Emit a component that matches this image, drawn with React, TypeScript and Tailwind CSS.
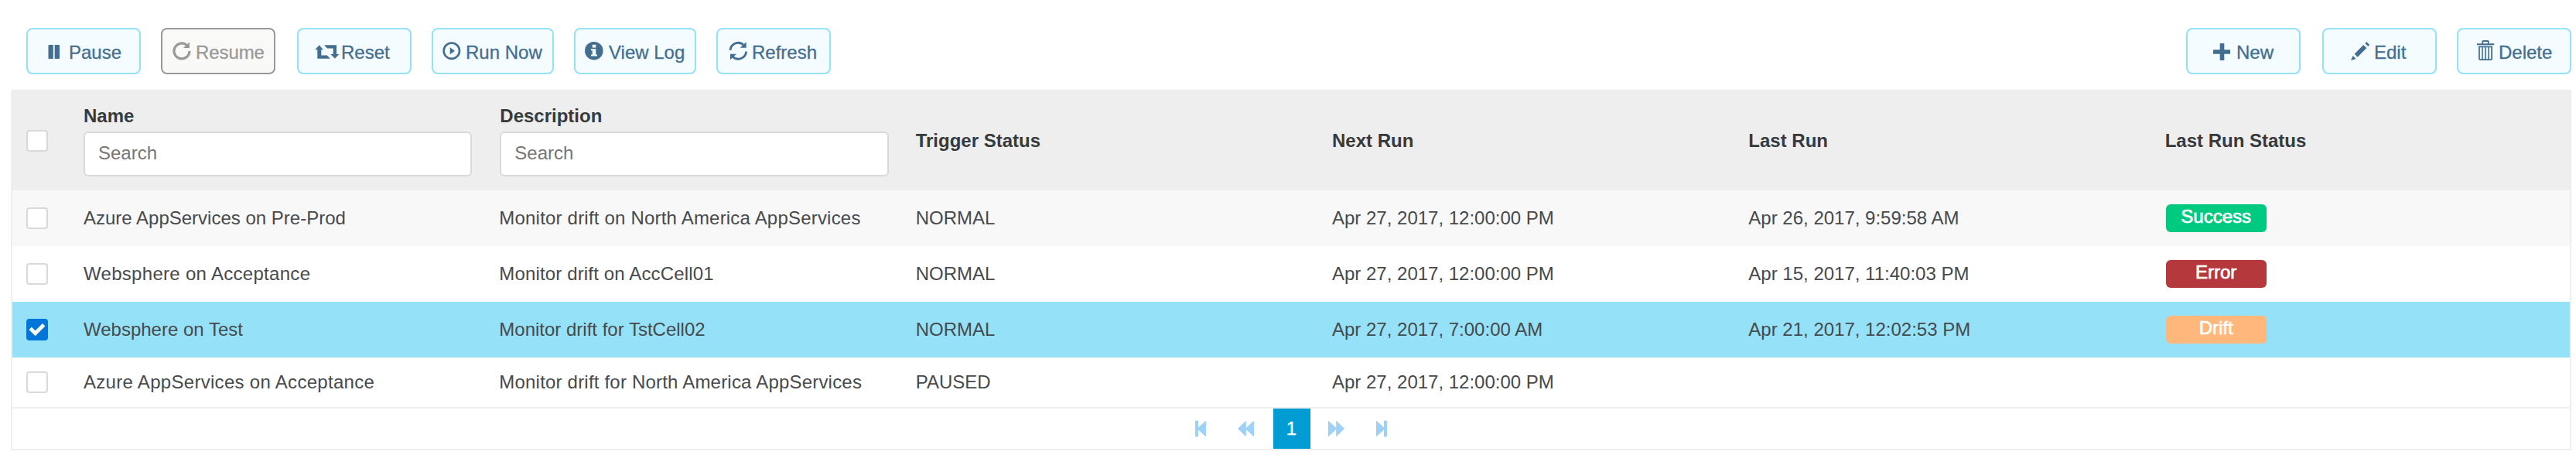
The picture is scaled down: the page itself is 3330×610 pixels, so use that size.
import React from "react";

type IconProps = { w: number; children: React.ReactNode };

function Icon({ w, children }: IconProps) {
  return (
    <svg width={w} height={26} viewBox={`0 0 ${w} 26`} fill="currentColor" className="shrink-0">
      {children}
    </svg>
  );
}

const PauseIcon = () => (
  <Icon w={16}>
    <rect x="0.5" y="6" width="6.300" height="18" rx="0.700" />
    <rect x="8.700" y="6" width="6.300" height="18" rx="0.700" />
  </Icon>
);

const ResumeIcon = () => (
  <Icon w={25}>
    <path d="M23 14A10 10 0 1 1 19.800 6.600" fill="none" stroke="currentColor" strokeWidth="3.200" />
    <path d="M23 2.300V10H15z" />
  </Icon>
);

const ResetIcon = () => (
  <Icon w={32}>
    <path d="M5.700 6.300L11 12.300H8.300V19.500H15.800L19.700 23.700H3.300V12.300H.3z" />
    <path d="M12 6.300H28V18H31.300L26 23.700L20.300 18H23.700V10.500H16z" />
  </Icon>
);

const RunIcon = () => (
  <Icon w={25}>
    <circle cx="12.800" cy="13.700" r="10.200" fill="none" stroke="currentColor" strokeWidth="2.600" />
    <path d="M10.700 9.300V18.300L17 13.800z" />
  </Icon>
);

const InfoIcon = () => (
  <Icon w={25}>
    <circle cx="12.800" cy="13.700" r="11.800" />
    <path d="M10.700 5.800h4.600v3.600h-4.600zM9 11.300h6.300v7.200H17v2H9v-2h1.700v-5.200H9z" fill="#f4fcff" />
  </Icon>
);

const RefreshIcon = () => (
  <Icon w={25}>
    <path d="M2 12.800A10.400 10.400 0 0 1 19.500 6.200M22.700 14.600A10.400 10.400 0 0 1 5.100 21.200" fill="none" stroke="currentColor" strokeWidth="2.800" />
    <path d="M22.700 2.300V9.800H14.700zM2 25.300V17.800H10z" />
  </Icon>
);

const PlusIcon = () => (
  <Icon w={24}>
    <path d="M9.700 4h5.600v8.200H23v5.600h-7.700V26H9.700v-8.200H1v-5.600h8.700z" />
  </Icon>
);

const PencilIcon = () => (
  <Icon w={25}>
    <path d="M17.200 5.900L21.300 10L9.700 21.800L5.600 17.700zM19.200 4L20.800 2.400Q21.300 2 21.800 2.400L24.700 5.500Q25 6 24.700 6.500L23.200 8zM3.500 19.900L7.600 23.900L1 26z" />
  </Icon>
);

const TrashIcon = () => (
  <Icon w={24}>
    <path d="M1 4.300h22.300v1.900H1zM7.300 4.300V1.800Q7.300 0 9 0h6q1.700 0 1.700 1.800v2.500h-1.900V1.900H9.200v2.400z" />
    <path d="M3.900 8.300V24q0 1.100 1.100 1.100h14q1.100 0 1.100-1.100V8.300z" fill="none" stroke="currentColor" strokeWidth="1.800" />
    <path d="M8 8.300v17M12 8.300v17M16 8.300v17" stroke="currentColor" strokeWidth="1.600" />
  </Icon>
);

type Action = { label: string; icon: React.ReactNode; cls: string; disabled?: boolean };

const leftActions: Action[] = [
  { label: "Pause", icon: <PauseIcon />, cls: "w-[148px] pl-[26px] gap-[11px]" },
  { label: "Resume", icon: <ResumeIcon />, cls: "w-[148px] pl-[12px] gap-[6px] tracking-[-0.1px]", disabled: true },
  { label: "Reset", icon: <ResetIcon />, cls: "ml-0.5 w-[148px] pl-[21px] gap-[2px]" },
  { label: "Run Now", icon: <RunIcon />, cls: "w-[158px] pl-[11px] gap-[6px]" },
  { label: "View Log", icon: <InfoIcon />, cls: "w-[158px] pl-[11px] gap-[7px]" },
  { label: "Refresh", icon: <RefreshIcon />, cls: "w-[148px] pl-[14px] gap-[5px]" },
];

const rightActions: Action[] = [
  { label: "New", icon: <PlusIcon />, cls: "w-[148px] pl-[32px] gap-[7px]" },
  { label: "Edit", icon: <PencilIcon />, cls: "ml-0.5 w-[148px] pl-[34px] gap-[6px]" },
  { label: "Delete", icon: <TrashIcon />, cls: "w-[148px] pl-[23px] gap-[5px]" },
];

function ActionButton({ label, icon, cls, disabled }: Action) {
  const tone = disabled
    ? "border-[#999999] bg-[#f9f9f7] text-[#999999]"
    : "border-[#93e2f8] bg-[#f4fcff] text-[#446e8f]";
  return (
    <button disabled={disabled} className={`flex h-[60px] items-start whitespace-nowrap rounded-lg border-2 pt-[14px] leading-8 [-webkit-text-stroke:0.3px_currentColor] ${tone} ${cls}`}>
      {icon}
      <span>{label}</span>
    </button>
  );
}

function Checkbox({ checked = false }: { checked?: boolean }) {
  return checked ? (
    <span className="flex h-7 w-7 items-center justify-center rounded bg-[#0275d8]">
      <svg width="28" height="28" viewBox="0 0 28 28" fill="none" stroke="#fff" strokeWidth="4.800">
        <path d="M5.200 12.400L11.600 18.800L22.700 7.800" />
      </svg>
    </span>
  ) : (
    <span className="block h-7 w-7 rounded border-2 border-[#d9d9d9] bg-white" />
  );
}

type Status = "Success" | "Error" | "Drift";

const statusColor: Record<Status, string> = {
  Success: "bg-[#00ca80]",
  Error: "bg-[#b5383d]",
  Drift: "bg-[#ffb77b]",
};

type Row = {
  name: string;
  nameCls?: string;
  desc: string;
  descCls?: string;
  trigger: string;
  next: string;
  last?: string;
  status?: Status;
  selected?: boolean;
  cls: string;
};

const rows: Row[] = [
  { name: "Azure AppServices on Pre-Prod", desc: "Monitor drift on North America AppServices", descCls: "tracking-[0.2px]", trigger: "NORMAL", next: "Apr 27, 2017, 12:00:00 PM", last: "Apr 26, 2017, 9:59:58 AM", status: "Success", cls: "h-[72px] bg-[#f8f8f8]" },
  { name: "Websphere on Acceptance", nameCls: "tracking-[0.3px]", desc: "Monitor drift on AccCell01", descCls: "tracking-[0.15px]", trigger: "NORMAL", next: "Apr 27, 2017, 12:00:00 PM", last: "Apr 15, 2017, 11:40:03 PM", status: "Error", cls: "h-[72px] bg-white" },
  { name: "Websphere on Test", desc: "Monitor drift for TstCell02", trigger: "NORMAL", next: "Apr 27, 2017, 7:00:00 AM", last: "Apr 21, 2017, 12:02:53 PM", status: "Drift", selected: true, cls: "h-[72px] bg-[#94e1f8]" },
  { name: "Azure AppServices on Acceptance", nameCls: "tracking-[0.3px]", desc: "Monitor drift for North America AppServices", descCls: "tracking-[0.2px]", trigger: "PAUSED", next: "Apr 27, 2017, 12:00:00 PM", cls: "h-[64px] bg-white" },
];

const grid = "grid grid-cols-[76px_repeat(6,minmax(0,1fr))]";

function SearchHeader({ title }: { title: string }) {
  return (
    <div className="pl-4 pr-5 pt-4">
      <div className="leading-9">{title}</div>
      <input
        placeholder="Search"
        className="mt-0.5 block h-[58px] w-full rounded-md border-2 border-[#d9d9d9] bg-white px-[17px] pb-0.5 font-normal placeholder:text-[#757575]"
      />
    </div>
  );
}

export default function App() {
  return (
    <div className="h-[610px] w-[3330px] bg-white font-['Liberation_Sans',Arial,sans-serif] text-2xl text-[#464a4c]">
      <div className="flex h-[116px] justify-between pl-[34px] pr-[6px] pt-9">
        <div className="flex gap-[26px]">
          {leftActions.map((a) => <ActionButton key={a.label} {...a} />)}
        </div>
        <div className="flex gap-[26px]">
          {rightActions.map((a) => <ActionButton key={a.label} {...a} />)}
        </div>
      </div>

      <div className="ml-[14px] mr-[6px] border-x-2 border-b-2 border-[#eeeeee] bg-white">
        <div className={`${grid} h-[130px] bg-[#eeeeee] font-bold text-[#373a3c]`}>
          <div className="flex items-center pl-[18px] pt-[2px]"><Checkbox /></div>
          <SearchHeader title="Name" />
          <SearchHeader title="Description" />
          {["Trigger Status", "Next Run", "Last Run", "Last Run Status"].map((t) => (
            <div key={t} className="flex items-center px-[15px] pt-[2px]">{t}</div>
          ))}
        </div>

        {rows.map((r) => (
          <div key={r.name} className={`${grid} ${r.cls} items-center whitespace-nowrap`}>
            <div className="pl-[18px]"><Checkbox checked={r.selected} /></div>
            <div className={`px-4 ${r.nameCls ?? ""}`}>{r.name}</div>
            <div className={`px-[15px] ${r.descCls ?? ""}`}>{r.desc}</div>
            <div className="px-[15px]">{r.trigger}</div>
            <div className="px-[15px]">{r.next}</div>
            <div className="px-[15px]">{r.last}</div>
            <div className="px-4">
              {r.status && (
                <span className={`flex h-9 w-[130px] items-center justify-center rounded-md pb-1 text-white [-webkit-text-stroke:0.7px_#fff] ${statusColor[r.status]}`}>
                  {r.status}
                </span>
              )}
            </div>
          </div>
        ))}

        <div className="flex h-[54px] items-center justify-center border-t-2 border-[#eeeeee] text-[#9fd0f6]">
          <svg width="14" height="22" viewBox="0 0 14 22" fill="currentColor">
            <path d="M0 1.500Q0 .5 1 .5H3Q4 .5 4 1.500V9.500L14 .5V21.500L4 12.500V20.500Q4 21.500 3 21.500H1Q0 21.500 0 20.500z" />
          </svg>
          <svg width="21" height="22" viewBox="0 0 21 22" fill="currentColor" className="ml-[41px]">
            <path d="M10.800 .5V10L21 .5V21.500L10.800 12V21.500L0 11z" />
          </svg>
          <span className="ml-[25px] flex h-[52px] w-12 items-center justify-center bg-[#009cd3] pb-px pr-px text-white [-webkit-text-stroke:0.3px_#fff]">1</span>
          <svg width="21" height="22" viewBox="0 0 21 22" fill="currentColor" className="ml-[23px]">
            <path d="M10.200 .5V10L0 .5V21.500L10.200 12V21.500L21 11z" />
          </svg>
          <svg width="14" height="22" viewBox="0 0 14 22" fill="currentColor" className="ml-[41px]">
            <path d="M14 1.500Q14 .5 13 .5H11Q10 .5 10 1.500V9.500L0 .5V21.500L10 12.500V20.500Q10 21.500 11 21.500H13Q14 21.500 14 20.500z" />
          </svg>
        </div>
      </div>
    </div>
  );
}
